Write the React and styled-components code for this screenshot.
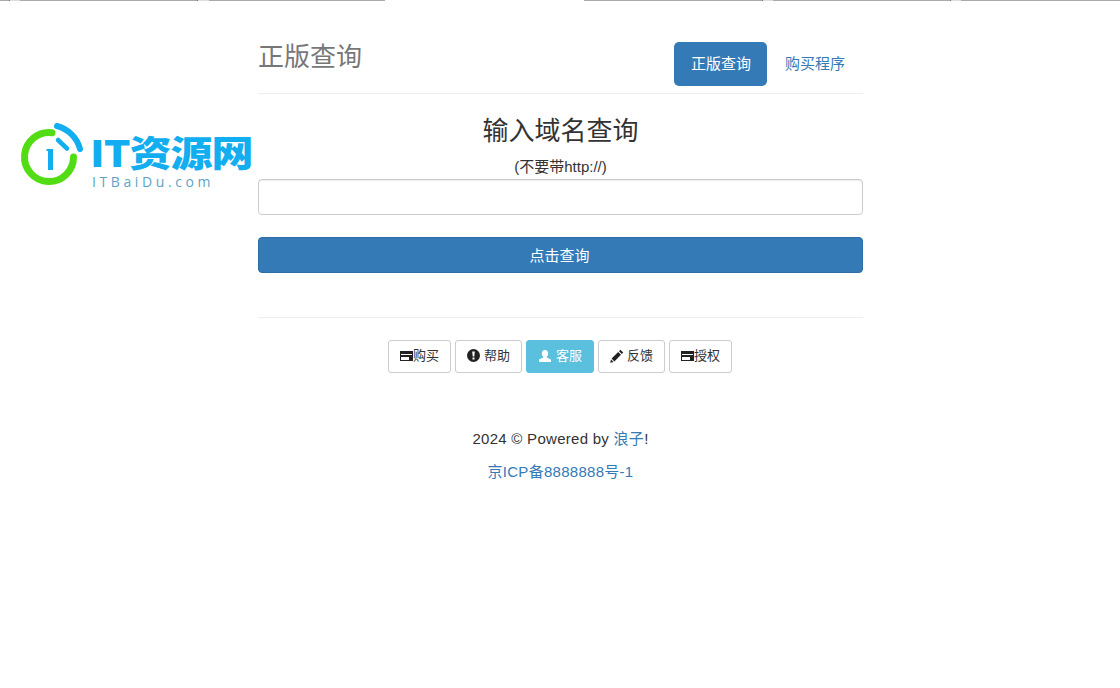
import React from "react";
import styled, { createGlobalStyle } from "styled-components";

const GlobalStyle = createGlobalStyle`
  html, body {
    margin: 0;
    padding: 0;
    background: #fff;
  }
  body {
    font-family: "Liberation Sans", "Noto Sans CJK SC", sans-serif;
    font-size: 14px;
    line-height: 20px;
    color: #333;
  }
  * {
    box-sizing: border-box;
  }
`;

const Page = styled.div`
  position: relative;
  height: 688px;
  overflow: hidden;
`;

const Strip = styled.div`
  display: flex;
  height: 1px;
`;

const StripPart = styled.div`
  height: 1px;
  flex: ${(p) => (p.$grow ? "1" : `0 0 ${p.$w}px`)};
  background: ${(p) => p.$color};
`;

const Container = styled.div`
  width: 605px;
  margin-left: 258px;
`;

const Header = styled.div`
  display: flex;
  justify-content: space-between;
  height: 92px;
  padding-top: 41px;
`;

const Title = styled.h3`
  margin: 0;
  font-size: 26px;
  line-height: 30px;
  font-weight: 400;
  color: #777;
`;

const Pills = styled.div`
  display: flex;
  gap: 2px;
  height: 44px;
  margin-right: 2px;
`;

const Pill = styled.a`
  display: flex;
  align-items: center;
  padding: 0 16px 0 ${(p) => (p.$active ? "17px" : "16px")};
  border-radius: 5px;
  font-size: 15px;
  color: ${(p) => (p.$active ? "#fff" : "#337ab7")};
  background: ${(p) => (p.$active ? "#337ab7" : "transparent")};
`;

const Rule = styled.div`
  height: 1px;
  background: #eee;
`;

const Query = styled.div`
  text-align: center;
`;

const Heading = styled.h2`
  margin: 19px 0 0;
  font-size: 26px;
  line-height: 36px;
  font-weight: 400;
`;

const Hint = styled.div`
  margin-top: 10px;
  font-size: 15px;
  line-height: 16px;
`;

const Field = styled.input`
  display: block;
  width: 100%;
  height: 36px;
  margin-top: 4px;
  border: 1px solid #ccc;
  border-radius: 4px;
  background: #fff;
  box-shadow: inset 0 1px 1px rgba(0, 0, 0, 0.075);
`;

const Submit = styled.button`
  display: block;
  width: 100%;
  height: 36px;
  margin: 22px 0 44px;
  padding: 0 2px 2px 0;
  border: 1px solid #2e6da4;
  border-radius: 4px;
  background: #337ab7;
  color: #fff;
  font: 400 15px "Liberation Sans", "Noto Sans CJK SC", sans-serif;
`;

const Tools = styled.div`
  display: flex;
  gap: 4px;
  margin-top: 22px;
  padding-left: 130px;
`;

const Tool = styled.a`
  display: flex;
  align-items: center;
  gap: ${(p) => p.$gap}px;
  height: 33px;
  padding: 0 11px 2px;
  border: 1px solid ${(p) => (p.$info ? "#5bc0de" : "#ccc")};
  border-radius: 3px;
  font-size: 13px;
  color: ${(p) => (p.$info ? "#fff" : "#333")};
  background: ${(p) => (p.$info ? "#5bc0de" : "#fff")};
`;

const Footer = styled.div`
  margin-top: 56px;
  text-align: center;
  font-size: 15px;
  line-height: 20px;
  letter-spacing: 0.28px;
`;

const FootLine = styled.p`
  margin: 0 0 13px;
`;

const Link = styled.a`
  color: #337ab7;
`;

const Logo = styled.div`
  position: absolute;
  left: 20px;
  top: 122px;
  width: 236px;
  height: 68px;
`;

const LogoMark = styled.svg`
  position: absolute;
  left: 0;
  top: 0;
`;

const LogoName = styled.div`
  position: absolute;
  left: 70px;
  top: 13px;
  font-family: "Noto Sans CJK SC", "Liberation Sans", sans-serif;
  font-size: 42px;
  line-height: 38px;
  font-weight: 900;
  letter-spacing: -1px;
  color: #12aeef;
  white-space: nowrap;
  transform: scaleY(0.86);
  transform-origin: top left;
`;

const LogoSite = styled.div`
  position: absolute;
  left: 72px;
  top: 52px;
  font-family: "Open Sans", sans-serif;
  font-size: 14px;
  line-height: 16px;
  letter-spacing: 3.6px;
  color: #5fa3c4;
  white-space: nowrap;
`;

const strip = [
  [9, "#aaa"], [1, "#777"], [10, "#ddd"], [177, "#aaa"], [1, "#777"], [11, "#ddd"],
  [176, "#aaa"], [199, "#fff"], [178, "#aaa"], [1, "#777"], [10, "#ddd"], [177, "#aaa"],
  [1, "#777"], [10, "#ddd"],
];

const CardIcon = ({ color }) => (
  <svg width="13" height="14" viewBox="0 0 13 14">
    <path fill={color} d="M0 2h13v10H0z" />
    <path fill="#fff" d="M1 5h11v1H1zM1 8h8v3H1z" />
  </svg>
);

const AlertIcon = () => (
  <svg width="13" height="13" viewBox="0 0 13 13">
    <circle cx="6.5" cy="6.5" r="6.5" fill="#222" />
    <path fill="#fff" d="M5.2 2.4h2.6L7.3 7.6H5.7zM5.5 8.6h2v2h-2z" />
  </svg>
);

const UserIcon = () => (
  <svg width="14" height="14" viewBox="0 0 14 14">
    <path
      fill="#fff"
      d="M7 1c2 0 3.2 1.5 3.2 3.6 0 1.4-.6 2.6-1.4 3.2v.9c1.6.5 4.2 1.2 4.2 2.4V13H1v-1.9c0-1.2 2.6-1.9 4.2-2.4v-.9C4.4 7.2 3.8 6 3.8 4.6 3.8 2.5 5 1 7 1z"
    />
  </svg>
);

const PencilIcon = () => (
  <svg width="14" height="14" viewBox="0 0 14 14">
    <path fill="#222" d="M10.4.8l2.8 2.8-1.4 1.4L9 2.2zM8.2 3l2.8 2.8-6.6 6.6-2.8-2.8zM1 10.4l2.6 2.6-3.4.8z" />
  </svg>
);

const LogoIcon = () => (
  <LogoMark width="66" height="68" viewBox="0 0 66 68">
    <path
      d="M32 10.7A24.5 24.5 0 1 0 53.5 35"
      fill="none"
      stroke="#52dc14"
      strokeWidth="7"
      strokeLinecap="round"
    />
    <path
      d="M37 4A32 32 0 0 1 60 27"
      fill="none"
      stroke="#12aeef"
      strokeWidth="6"
      strokeLinecap="round"
    />
    <path d="M38 18l9 8.5" fill="none" stroke="#12aeef" strokeWidth="4.5" strokeLinecap="round" />
    <path fill="#12aeef" d="M28 27h5v21h-5V29h-1.5v-2z" />
  </LogoMark>
);

export default function App() {
  return (
    <Page>
      <GlobalStyle />
      <Strip>
        {strip.map(([w, color], i) => (
          <StripPart key={i} $w={w} $color={color} />
        ))}
        <StripPart $grow $color="#aaa" />
      </Strip>
      <Container>
        <Header>
          <Title>正版查询</Title>
          <Pills>
            <Pill $active>正版查询</Pill>
            <Pill>购买程序</Pill>
          </Pills>
        </Header>
        <Rule />
        <Query>
          <Heading>输入域名查询</Heading>
          <Hint>(不要带http://)</Hint>
          <Field />
          <Submit>点击查询</Submit>
        </Query>
        <Rule />
        <Tools>
          <Tool $gap={0}><CardIcon color="#222" />购买</Tool>
          <Tool $gap={4}><AlertIcon />帮助</Tool>
          <Tool $info $gap={4}><UserIcon />客服</Tool>
          <Tool $gap={3}><PencilIcon />反馈</Tool>
          <Tool $gap={0}><CardIcon color="#222" />授权</Tool>
        </Tools>
        <Footer>
          <FootLine>2024 © Powered by <Link>浪子</Link>!</FootLine>
          <FootLine><Link>京ICP备8888888号-1</Link></FootLine>
        </Footer>
      </Container>
      <Logo>
        <LogoIcon />
        <LogoName>IT资源网</LogoName>
        <LogoSite>ITBaiDu.com</LogoSite>
      </Logo>
    </Page>
  );
}
